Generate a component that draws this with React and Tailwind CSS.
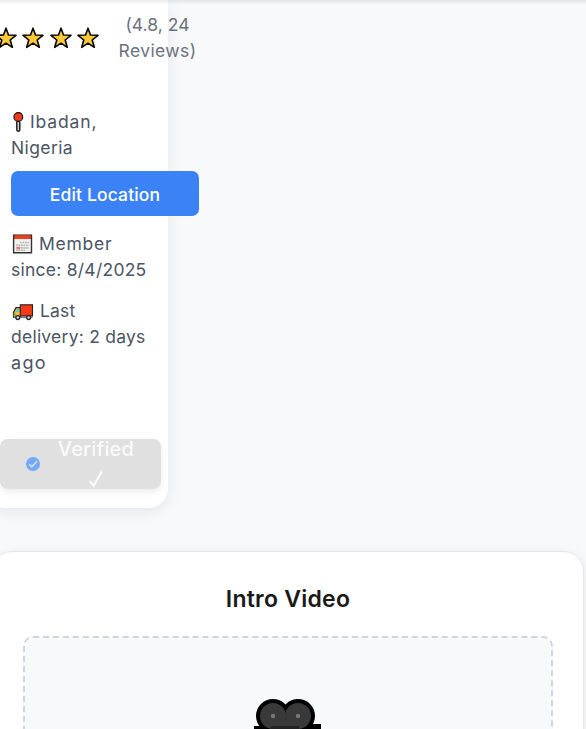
import React from "react";

const STAR = "M11 1.2 L13.5 8 L21 8.3 L15.2 13 L17.3 20.3 L11 16.2 L4.7 20.3 L6.8 13 L1 8.3 L8.5 8 Z";

function Star() {
  return (
    <svg className="h-[22px] w-[22px] shrink-0" viewBox="0 0 22 22">
      <path d={STAR} fill="#ffc937" stroke="#050505" strokeWidth="1.6" strokeLinejoin="round" />
    </svg>
  );
}

function Pin() {
  return (
    <svg className="mt-[3px] h-5 w-[19px] shrink-0" viewBox="0 0 19 20">
      <rect x="5.8" y="9" width="3" height="10.2" rx="1.4" fill="#d0d0d0" stroke="#111" strokeWidth="1.4" />
      <circle cx="7.3" cy="5" r="4.4" fill="#f33a1c" stroke="#111" strokeWidth="1.1" />
    </svg>
  );
}

function Calendar() {
  return (
    <svg className="mt-[3px] h-5 w-[28px] shrink-0" viewBox="0 0 28 20">
      <rect x="2.7" y="1" width="17.8" height="17.8" fill="#f2f2f2" />
      <rect x="2.7" y="1" width="17.8" height="4" fill="#f23c1b" />
      <path d="M9 8.5H18M5 11.2H18M5 13.9H18M5 16.3H14" stroke="#b4b4b4" strokeWidth="1.6" strokeDasharray="1.8 0.7" />
      <rect x="6" y="12.7" width="3" height="2.6" fill="#f07863" />
      <path d="M2.1 0.8H21" stroke="#333" strokeWidth="0.8" />
      <path d="M2.6 0.8V18.7H20.5V0.8" fill="none" stroke="#333" strokeWidth="1.4" />
    </svg>
  );
}

function Truck() {
  return (
    <svg className="mt-[5px] h-[18px] w-[29px] shrink-0" viewBox="0 0 29 18">
      <path d="M2.5 14.5V9.5L5 4.7H10V14.5Z" fill="#f7bd2c" stroke="#222" strokeWidth="1.2" />
      <path d="M4.6 8.7L6 5.7H8.6V8.7Z" fill="#49c6e8" />
      <rect x="2.6" y="10.4" width="2.2" height="2.6" fill="#6ab64a" />
      <rect x="9.3" y="1.8" width="12.2" height="11.2" fill="#f23a17" stroke="#222" strokeWidth="1.1" />
      <path d="M2.5 14.3H21.5" stroke="#777" strokeWidth="1.8" />
      <circle cx="6.8" cy="14.6" r="1.9" fill="#ddd" stroke="#222" strokeWidth="1.3" />
      <circle cx="17.6" cy="14.6" r="1.9" fill="#ddd" stroke="#222" strokeWidth="1.3" />
    </svg>
  );
}

function ProfileCard() {
  return (
    <section className="-ml-[14px] h-[508px] w-[182px] shrink-0 rounded-b-[20px] bg-white pl-[14px] shadow-[0_4px_16px_rgba(0,0,0,0.08)]">
      <div className="flex h-[109px] items-start whitespace-nowrap pt-3 text-[17.5px] leading-[26px] text-[#6b7280]">
        <div className="-ml-[5.5px] mt-[15px] flex w-[105px] shrink-0 gap-[5.5px]">
          <Star />
          <Star />
          <Star />
          <Star />
        </div>
        <div className="ml-[19px] flex w-[78px] shrink-0 flex-col items-center">
          <div className="tracking-[0.05px]">(4.8, 24</div>
          <div className="tracking-[0.4px]">Reviews)</div>
        </div>
      </div>
      <div className="flex flex-col whitespace-nowrap pl-[11px] text-[17.5px] leading-[26px] text-[#4b5563]">
        <div className="flex tracking-[0.85px]">
          <Pin />
          <span>Ibadan,</span>
        </div>
        <div className="tracking-[0.4px]">Nigeria</div>
        <button className="mb-[15px] mt-[10px] h-[45px] w-[188px] rounded-[7px] bg-[#3b82f6] pt-[2px] text-[17.5px] font-medium tracking-[0.15px] text-white">
          Edit Location
        </button>
        <div className="flex tracking-[0.75px]">
          <Calendar />
          <span>Member</span>
        </div>
        <div className="tracking-[0.25px]">since: 8/4/2025</div>
        <div className="mt-[15px] flex tracking-[0.15px]">
          <Truck />
          <span>Last</span>
        </div>
        <div className="tracking-[0.24px]">delivery: 2 days</div>
        <div className="text-[18px] tracking-[1.3px]">ago</div>
      </div>
      <div className="mt-[63px] flex h-[50px] w-[161px] items-center rounded-[8px] bg-[#e0e0e0] shadow-[0_3px_7px_rgba(0,0,0,0.08)]">
        <svg className="ml-[26px] h-[14px] w-[14px]" viewBox="0 0 14 14">
          <circle cx="7" cy="7" r="7" fill="#73aaf8" />
          <path d="M3.2 7.2L5.8 9.8L11 4.2" fill="none" stroke="#e0e0e0" strokeWidth="1.5" />
        </svg>
        <div className="ml-[18px] flex w-[76px] flex-col items-center text-[20px] font-medium leading-[30px] tracking-[0.2px] text-[#fafafa]">
          <span>Verified</span>
          <svg className="h-[30px] w-4" viewBox="0 0 16 30">
            <path d="M1.5 17L5.7 21.8L13.7 7.5" fill="none" stroke="#fafafa" strokeWidth="2.2" />
          </svg>
        </div>
      </div>
    </section>
  );
}

function VideoCard() {
  return (
    <section className="-ml-[8px] mt-[43px] h-[220px] w-[592px] shrink-0 rounded-t-[20px] border border-[#e5e7eb] bg-white pl-[30px] pt-[29px] shadow-[0_4px_16px_rgba(0,0,0,0.08)]">
      <h2 className="h-[55px] w-[530px] text-center text-[23px] font-semibold leading-9 tracking-[0.25px] text-[#1a1a1a]">
        Intro Video
      </h2>
      <div className="h-[140px] w-[530px] rounded-[10px] border-2 border-dashed border-[#d1d5db] bg-[#f8f9fb] pl-[229px] pt-[60px]">
        <svg className="h-[60px] w-[72px]" viewBox="0 0 72 60">
          <rect x="0" y="28" width="60" height="30" fill="#000" />
          <rect x="54" y="26" width="13" height="30" fill="#000" />
          <circle cx="19" cy="18" r="17" fill="#000" />
          <circle cx="44" cy="18" r="17" fill="#000" />
          <circle cx="19" cy="18" r="13" fill="#393939" />
          <circle cx="44" cy="18" r="13" fill="#393939" />
          <rect x="19" y="22" width="25" height="8" fill="#393939" />
          <rect x="17" y="28" width="28" height="6" fill="#222" />
          <circle cx="19" cy="18" r="2.2" fill="#777" />
          <circle cx="44" cy="18" r="2.2" fill="#777" />
        </svg>
      </div>
    </section>
  );
}

export default function App() {
  return (
    <main className="relative flex h-[729px] w-[586px] flex-col overflow-hidden bg-[#f8f9fb] font-['Inter','Liberation_Sans',sans-serif]">
      <ProfileCard />
      <VideoCard />
      <div className="absolute inset-x-0 top-0 h-[5px] bg-gradient-to-b from-black/8 to-transparent" />
    </main>
  );
}
